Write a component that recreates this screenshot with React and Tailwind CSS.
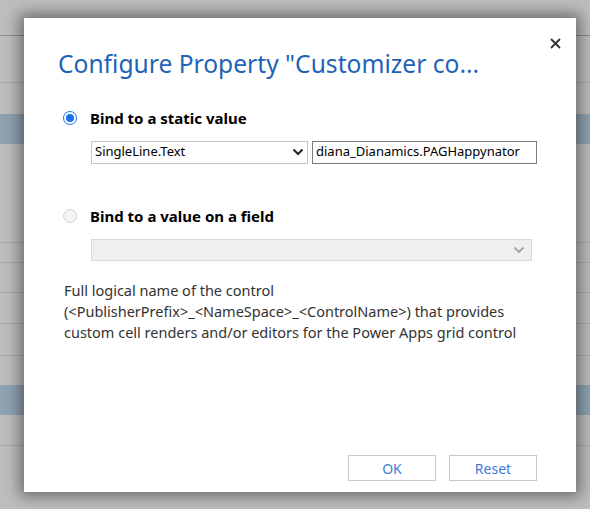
import React from 'react';

// background grid rows behind the modal: [height, kind]
const rows = [
  [35, 'plain'],
  [1, 'dark'],
  [46, 'plain'],
  [1, 'line'],
  [31, 'plain'],
  [30, 'blue'],
  [98, 'plain'],
  [1, 'line'],
  [19, 'plain'],
  [1, 'line'],
  [29, 'plain'],
  [1, 'line'],
  [30, 'plain'],
  [1, 'line'],
  [31, 'plain'],
  [1, 'line'],
  [29, 'plain'],
  [30, 'blue'],
  [30, 'plain'],
  [1, 'line'],
  [63, 'plain'],
];

const rowClass = {
  plain: 'bg-[#bdbdbd]',
  dark: 'bg-[#8c8c8c]',
  line: 'bg-[#a9a9a9]',
  blue: 'bg-[#8fa2b2]',
};

function Chevron({ color }) {
  return (
    <svg width="12" height="8" viewBox="0 0 12 8" fill="none">
      <path d="M1.5 1.5 L6 6 L10.5 1.5" stroke={color} strokeWidth="2" />
    </svg>
  );
}

function Radio({ checked }) {
  if (checked) {
    return (
      <span className="flex h-[14px] w-[14px] items-center justify-center rounded-full border-[1.5px] border-[#1a73e8]">
        <span className="h-[8px] w-[8px] rounded-full bg-[#1a73e8]" />
      </span>
    );
  }
  return <span className="h-[14px] w-[14px] rounded-full border border-[#d4d4d4] bg-[#f4f4f4]" />;
}

export default function App() {
  return (
    <div className="relative h-[509px] w-[590px] overflow-hidden font-['Segoe_UI','Noto_Sans',sans-serif]">
      <div className="flex flex-col">
        {rows.map(([h, kind], i) => (
          <div key={i} className={rowClass[kind]} style={{ height: h }} />
        ))}
      </div>

      {/* Dialog */}
      <div className="absolute left-[24px] top-[18px] flex h-[474px] w-[552px] flex-col bg-white shadow-[0_0_14px_4px_rgba(0,0,0,0.45)]">
        <button className="absolute right-[15px] top-[20px] text-[#333]">
          <svg width="11" height="11" viewBox="0 0 11 11">
            <path d="M1 1 L10 10 M10 1 L1 10" stroke="#333" strokeWidth="1.8" />
          </svg>
        </button>

        <h1 className="ml-[34px] mt-[29px] whitespace-nowrap text-[24.6px] leading-[34px] text-[#1f63b6]">
          Configure Property "Customizer co...
        </h1>

        <div className="ml-[39px] mt-[26px] flex items-center gap-[13px]">
          <Radio checked />
          <span className="text-[15px] font-bold text-black">Bind to a static value</span>
        </div>

        <div className="ml-[67px] mt-[11px] flex gap-[4px]">
          <div className="flex h-[23px] w-[217px] items-center justify-between border border-[#c4c4c4] pl-[3px] pr-[3px] text-[13px] text-black">
            <span>SingleLine.Text</span>
            <Chevron color="#222" />
          </div>
          <div className="flex h-[23px] w-[225px] items-center border border-[#7a7a7a] pl-[3px] text-[13px] text-black">
            diana_Dianamics.PAGHappynator
          </div>
        </div>

        <div className="ml-[39px] mt-[41px] flex items-center gap-[13px]">
          <Radio />
          <span className="text-[15px] font-bold text-black">Bind to a value on a field</span>
        </div>

        <div className="ml-[67px] mt-[12px] flex h-[22px] w-[441px] items-center justify-end border border-[#dadada] bg-[#efefef] pr-[6px]">
          <Chevron color="#a8a8a8" />
        </div>

        <p className="ml-[40px] mt-[19px] w-[470px] text-[14.5px] leading-[21px] text-[#333]">
          Full logical name of the control (&lt;PublisherPrefix&gt;_&lt;NameSpace&gt;_&lt;ControlName&gt;) that provides custom cell renders and/or editors for the Power Apps grid control
        </p>

        <div className="mt-auto mb-[11px] mr-[39px] flex justify-end gap-[13px]">
          <button className="h-[26px] w-[88px] border border-[#c8c8c8] text-[14px] text-[#3f7ad8]">OK</button>
          <button className="h-[26px] w-[88px] border border-[#c8c8c8] text-[14px] text-[#3f7ad8]">Reset</button>
        </div>
      </div>
    </div>
  );
}
